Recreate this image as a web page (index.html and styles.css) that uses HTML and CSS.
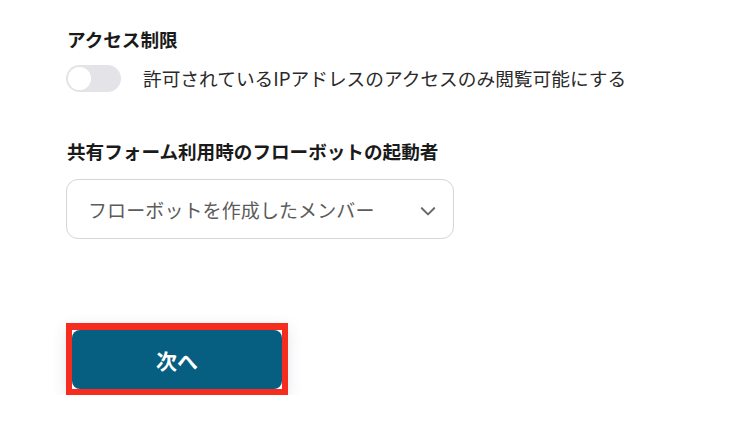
FILE: index.html
```html
<!DOCTYPE html>
<html lang="ja">
<head>
    <meta charset="UTF-8">
    <meta name="viewport" content="width=device-width, initial-scale=1.0">
    <title>フォーム設定</title>
    <link rel="stylesheet" href="styles.css">
</head>
<body>

  <div class="settings">
    <!-- アクセス制限 -->
    <section class="field">
      <h3 class="field-title">アクセス制限</h3>
      <label class="toggle-row">
        <span class="toggle"><span class="toggle-knob"></span></span>
        <span class="toggle-label">許可されているIPアドレスのアクセスのみ閲覧可能にする</span>
      </label>
    </section>

    <!-- 起動者 -->
    <section class="field field-launcher">
      <h3 class="field-title">共有フォーム利用時のフローボットの起動者</h3>
      <div class="select">
        <span class="select-value">フローボットを作成したメンバー</span>
        <svg class="select-chevron" viewBox="0 0 16 16" fill="none">
          <path d="M2.5 5.5 8 11l5.5-5.5" stroke="#6b6b6b" stroke-width="1.8" stroke-linecap="round" stroke-linejoin="round"/>
        </svg>
      </div>
    </section>

    <div class="actions">
      <div class="highlight">
        <button class="next-btn">次へ</button>
      </div>
    </div>
  </div>

</body>
</html>
```

FILE: styles.css
```css
body {
  margin: 0;
  background-color: #ffffff;
  font-family: "Noto Sans CJK JP", "Noto Sans", sans-serif;
  color: #1f1f1f;
}

.settings {
  padding: 25px 0 0 66px;
  display: flex;
  flex-direction: column;
}

.field-title {
  margin: 0;
  font-size: 18.6px;
  line-height: 27px;
  font-weight: 700;
  color: #1a1a1a;
  padding-left: 1px;
}

.toggle-row {
  display: flex;
  align-items: center;
  gap: 22px;
  margin-top: 12px;
  height: 28px;
}

.toggle {
  position: relative;
  width: 55px;
  height: 27px;
  border-radius: 14px;
  background-color: #e4e4e8;
  flex-shrink: 0;
}

.toggle-knob {
  position: absolute;
  top: 2px;
  left: 2px;
  width: 23px;
  height: 23px;
  border-radius: 50%;
  background-color: #ffffff;
}

.toggle-label {
  font-size: 18.7px;
  color: #2a2a2a;
  line-height: 26px;
}

.field-launcher {
  margin-top: 45px;
}

.select {
  margin-top: 15px;
  height: 58px;
  border: 1px solid #d4d4dc;
  border-radius: 12px;
  display: flex;
  align-items: center;
  justify-content: space-between;
  padding: 0 16px 0 21px;
  box-sizing: content-box;
  width: 349px;
}

.select-value {
  font-size: 19px;
  color: #5c5c5c;
  letter-spacing: 0.1px;
}

.select-chevron {
  width: 18px;
  height: 18px;
  margin-top: 3px;
}

.actions {
  margin-top: 84px;
}

.highlight {
  display: inline-block;
  border: 6px solid #f52c1e;
  border-top-width: 7px;
  box-shadow: 0 4px 14px rgba(40, 50, 90, 0.12);
  line-height: 0;
}

.next-btn {
  width: 210px;
  height: 59px;
  border: none;
  border-radius: 8px;
  background-color: #065f80;
  color: #ffffff;
  font-family: "Noto Sans CJK JP", "Noto Sans", sans-serif;
  font-size: 21px;
  font-weight: 700;
  cursor: pointer;
}
```
